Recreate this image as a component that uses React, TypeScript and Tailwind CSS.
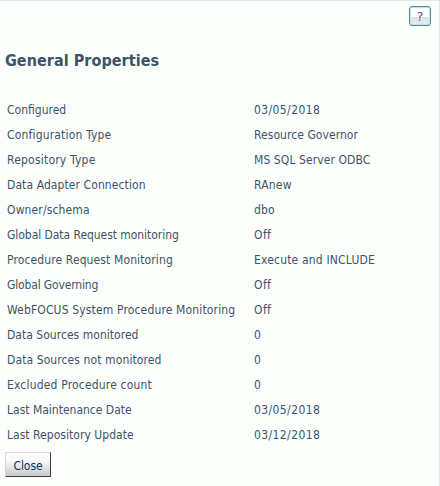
const properties = [
  { label: 'Configured', value: '03/05/2018', labelFit: '', valueFit: 'tracking-[0.4px]' },
  { label: 'Configuration Type', value: 'Resource Governor', labelFit: 'tracking-[0.17px]', valueFit: 'tracking-[0.06px]' },
  { label: 'Repository Type', value: 'MS SQL Server ODBC', labelFit: 'tracking-[0.21px]', valueFit: 'tracking-[0.09px]' },
  { label: 'Data Adapter Connection', value: 'RAnew', labelFit: 'tracking-[0.09px]', valueFit: 'tracking-[0.2px]' },
  { label: 'Owner/schema', value: 'dbo', labelFit: 'tracking-[0.14px]', valueFit: 'tracking-[0.1px]' },
  { label: 'Global Data Request monitoring', value: 'Off', labelFit: 'tracking-[-0.05px]', valueFit: 'tracking-[0.4px]' },
  { label: 'Procedure Request Monitoring', value: 'Execute and INCLUDE', labelFit: 'tracking-[0.12px]', valueFit: 'tracking-[0.18px]' },
  { label: 'Global Governing', value: 'Off', labelFit: 'tracking-[-0.15px]', valueFit: 'tracking-[0.4px]' },
  { label: 'WebFOCUS System Procedure Monitoring', value: 'Off', labelFit: 'tracking-[0.15px]', valueFit: 'tracking-[0.4px]' },
  { label: 'Data Sources monitored', value: '0', labelFit: 'tracking-[0.03px]', valueFit: '' },
  { label: 'Data Sources not monitored', value: '0', labelFit: 'tracking-[0.1px]', valueFit: '' },
  { label: 'Excluded Procedure count', value: '0', labelFit: 'tracking-[0.18px]', valueFit: '' },
  { label: 'Last Maintenance Date', value: '03/05/2018', labelFit: '', valueFit: 'tracking-[0.4px]' },
  { label: 'Last Repository Update', value: '03/12/2018', labelFit: 'tracking-[0.04px]', valueFit: 'tracking-[0.4px]' },
];

export default function App() {
  return (
    <div className="h-[486px] w-[440px] overflow-hidden border-t border-r border-[#e6e8e8] bg-[#fcfefc] font-['DejaVu_Sans_Condensed','DejaVu_Sans',sans-serif] text-[12px] text-[#3c5468]">
      <div className="flex h-[25px] justify-end pt-[5px] pr-[8px]">
        <button
          aria-label="Help"
          className="flex h-5 w-[22px] items-center justify-center rounded-[3px] border border-[#4a8ba0] bg-[linear-gradient(#ffffff_55%,#e2e2e4_55%,#e8e8e8)] pt-px font-['DejaVu_Sans',sans-serif] text-[13px] leading-none text-[#4f5f86] shadow-[inset_0_0_0_1px_#c9dfe6]"
        >
          ?
        </button>
      </div>

      <h1 className="mt-[23px] h-[24px] pl-[5px] text-[16px] leading-[24px] font-bold tracking-[0.05px] whitespace-nowrap">
        General Properties
      </h1>

      <dl className="mt-[24px] pl-[7px]">
        {properties.map((item) => (
          <div key={item.label} className="grid h-[25px] grid-cols-[247px_1fr] items-center whitespace-nowrap">
            <dt className={item.labelFit}>{item.label}</dt>
            <dd className={item.valueFit}>{item.value}</dd>
          </div>
        ))}
      </dl>

      <button className="mt-[5px] ml-[5px] flex h-[25px] w-[46px] items-center justify-center border border-t-[#dcd8e0] border-r-[#404040] border-b-[#404040] border-l-[#dcd8e0] bg-[linear-gradient(#fafbfa_30%,#c8c9c9)] pt-[2px] text-[12px] tracking-[-0.1px] text-[#10306c]">
        Close
      </button>
    </div>
  );
}
